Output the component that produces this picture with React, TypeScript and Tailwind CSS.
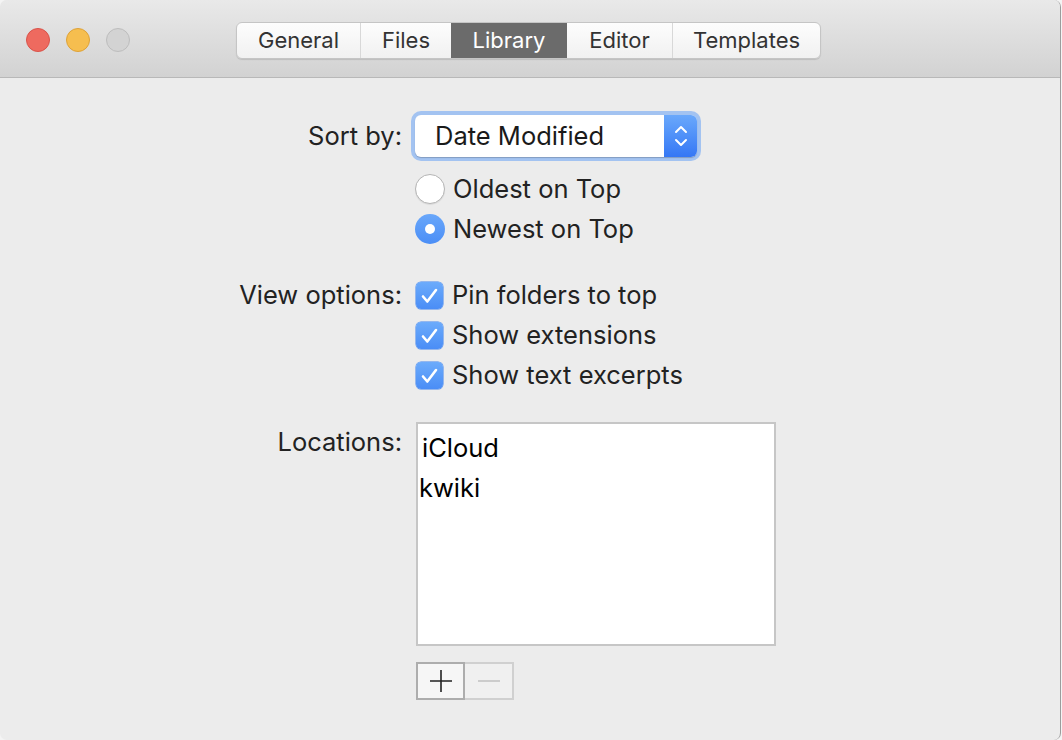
import React from "react";

const tabs = ["General", "Files", "Library", "Editor", "Templates"];
const tabWidths = ["w-[123px]", "w-[91px]", "w-[116px]", "w-[105px]", "w-[148px]"];

const Check = () => (
  <span className="flex h-[27px] w-[27px] items-center justify-center rounded-[5px] bg-gradient-to-b from-[#6cabfb] to-[#4a8df6] shadow-[0_0_0_0.5px_#3f82ee]">
    <svg width="27" height="27" viewBox="0 0 27 27" fill="none">
      <path d="M7 14.5l4.3 5L20 8" stroke="white" strokeWidth="2.6" strokeLinecap="round" strokeLinejoin="round" />
    </svg>
  </span>
);

const Radio = ({ on }: { on?: boolean }) =>
  on ? (
    <span className="flex h-[30px] w-[30px] items-center justify-center rounded-full bg-gradient-to-b from-[#69a7fa] to-[#4b8ef6]">
      <span className="h-[10px] w-[10px] rounded-full bg-white" />
    </span>
  ) : (
    <span className="h-[30px] w-[30px] rounded-full border border-[#b4b4b4] bg-white shadow-[0_1px_1px_rgba(0,0,0,0.08)]" />
  );

const Label = ({ children }: { children: React.ReactNode }) => (
  <div className="w-[402px] shrink-0 text-right text-[25.5px] leading-[40px] text-[#222]">{children}</div>
);

export default function App() {
  return (
    <div className="h-[740px] w-[1062px] bg-[#f4f4f4]" style={{ fontFamily: "Inter, Roboto, sans-serif" }}>
      <div className="flex h-[740px] w-[1061px] flex-col overflow-hidden rounded-[7px] border-r border-[#9c9c9c] bg-[#ececec]">
        {/* title bar */}
        <div className="relative flex h-[78px] shrink-0 items-start border-b border-[#b8b8b8] bg-gradient-to-b from-[#e9e9e9] to-[#d2d2d2]">
          <div className="flex gap-[16px] pl-[26px] pt-[28px]">
            <span className="h-[24px] w-[24px] rounded-full border border-[#d9534a] bg-[#ee6a5f]" />
            <span className="h-[24px] w-[24px] rounded-full border border-[#dea238] bg-[#f6be4f]" />
            <span className="h-[24px] w-[24px] rounded-full border border-[#bdbdbd] bg-[#d3d3d3]" />
          </div>
          <div className="ml-[106px] mt-[22px] flex h-[37px] overflow-hidden rounded-[6px] border border-[#c5c5c5] bg-gradient-to-b from-[#fdfdfd] to-[#f1f1f1] shadow-[0_1px_1px_rgba(0,0,0,0.12)]">
            {tabs.map((t, i) => (
              <div
                key={t}
                className={`flex items-center justify-center text-[22px] ${
                  t === "Library" ? "bg-[#6b6b6b] text-white" : "text-[#333]"
                } ${i > 0 && tabs[i - 1] !== "Library" && t !== "Library" ? "border-l border-[#d8d8d8]" : ""} ${tabWidths[i]}`}
              >
                {t}
              </div>
            ))}
          </div>
        </div>

        {/* content */}
        <div className="flex flex-col pt-[33px]">
          <div className="flex items-center">
            <Label>Sort by:</Label>
            <div className="ml-[9px] rounded-[10px] bg-[#a3c3f1] p-[4px]">
              <div className="flex h-[42px] w-[282px] overflow-hidden rounded-[6px] bg-white shadow-[0_1px_1px_rgba(0,0,0,0.2)]">
                <div className="flex flex-1 items-center pl-[20px] text-[25.5px] text-[#1a1a1a]">Date Modified</div>
                <div className="flex w-[33px] items-center justify-center bg-gradient-to-b from-[#6aa8fb] to-[#3577f5]">
                  <svg width="14" height="26" viewBox="0 0 14 26" fill="none">
                    <path d="M2 9l5-5 5 5M2 17l5 5 5-5" stroke="white" strokeWidth="2" strokeLinecap="round" strokeLinejoin="round" />
                  </svg>
                </div>
              </div>
            </div>
          </div>

          <div className="mt-[8px] flex flex-col pl-[415px]">
            <div className="flex h-[40px] items-center gap-[8px] text-[25.5px] text-[#222]">
              <Radio />
              <span>Oldest on Top</span>
            </div>
            <div className="flex h-[40px] items-center gap-[8px] text-[25.5px] text-[#222]">
              <Radio on />
              <span>Newest on Top</span>
            </div>
          </div>

          <div className="mt-[26px] flex">
            <Label>View options:</Label>
            <div className="ml-[14px] flex flex-col">
              {["Pin folders to top", "Show extensions", "Show text excerpts"].map((o) => (
                <div key={o} className="flex h-[40px] items-center gap-[9px] text-[25.5px] text-[#222]">
                  <Check />
                  <span>{o}</span>
                </div>
              ))}
            </div>
          </div>

          <div className="mt-[27px] flex">
            <Label>Locations:</Label>
            <div className="ml-[14px] flex flex-col">
              <div className="h-[224px] w-[360px] border-2 border-[#c6c6c6] bg-white pt-[4px] text-[25.5px] text-black">
                <div className="pl-[4px] leading-[40px]">iCloud</div>
                <div className="pl-[1px] leading-[40px]">kwiki</div>
              </div>
              <div className="mt-[16px] flex">
                <div className="flex h-[38px] w-[49px] items-center justify-center border-2 border-[#adadad] bg-[#f6f6f6]">
                  <svg width="22" height="22" viewBox="0 0 22 22">
                    <path d="M11 0v22M0 11h22" stroke="#222" strokeWidth="1.6" />
                  </svg>
                </div>
                <div className="flex h-[38px] w-[49px] items-center justify-center border-2 border-l-0 border-[#d0d0d0] bg-[#f0f0f0]">
                  <svg width="22" height="4" viewBox="0 0 22 4">
                    <path d="M0 2h22" stroke="#c4c4c4" strokeWidth="1.6" />
                  </svg>
                </div>
              </div>
            </div>
          </div>
        </div>
      </div>
    </div>
  );
}
